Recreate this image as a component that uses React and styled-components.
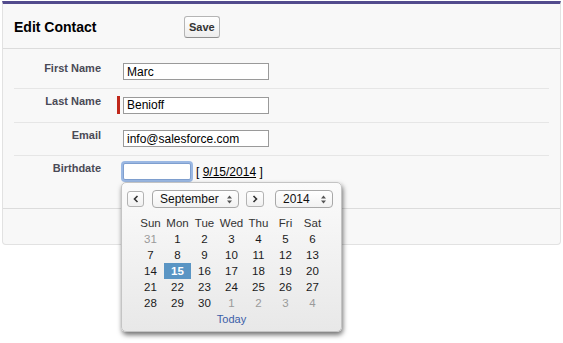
import React from "react";
import styled, { createGlobalStyle } from "styled-components";

const Global = createGlobalStyle`
  html, body { margin: 0; padding: 0; background: #fff; }
  html, body, #root { min-height: 343px; }
  body { font-family: "Liberation Sans", Arial, sans-serif; padding: 1px 3px 0 2px; }
  * { box-sizing: border-box; }
`;

const Panel = styled.div`
  width: 559px;
  border-top: 3px solid #524b8d;
  border-left: 1px solid #e2e2e2;
  border-right: 1px solid #e2e2e2;
  border-bottom: 1px solid #e2e2e2;
  border-radius: 0 0 4px 4px;
  background: #f8f8f8;
`;

const Header = styled.div`
  display: flex;
  align-items: center;
  height: 45px;
  padding: 1px 0 0 11px;
  border-bottom: 1px solid #dcdcdc;
`;

const Title = styled.h2`
  margin: 0;
  width: 170px;
  font-size: 14px;
  font-weight: bold;
  color: #000;
`;

const Button = styled.button`
  height: 22px;
  padding: 0 4px;
  font-family: "Liberation Sans", Arial, sans-serif;
  font-size: 11px;
  font-weight: bold;
  color: #333;
  background: linear-gradient(#ffffff, #ededed);
  border: 1px solid #b5b5b5;
  border-bottom-color: #8f8f8f;
  border-radius: 3px;
`;

const Body = styled.div`
  padding: 7px 11px 20px;
`;

const Row = styled.div`
  display: flex;
  align-items: flex-start;
  padding: 5px 0 8px;
  border-bottom: ${(p) => (p.$last ? "none" : "1px solid #e6e6e6")};
`;

const Label = styled.label`
  width: 87px;
  text-align: right;
  font-size: 11px;
  line-height: 14px;
  font-weight: bold;
  color: #4a4a56;
`;

const Field = styled.div`
  display: flex;
  align-items: center;
  padding: 2px 0 0 22px;
  font-size: 12px;
  color: #000;
`;

const Required = styled.span`
  width: 3px;
  height: 18px;
  margin-left: -6px;
  margin-right: 3px;
  background: #c0281b;
`;

const Input = styled.input`
  width: ${(p) => p.$w || 146}px;
  height: 17px;
  padding: 0 3px;
  font-family: "Liberation Sans", Arial, sans-serif;
  font-size: 12px;
  color: #000;
  background: #fff;
  border: 1px solid ${(p) => (p.$focus ? "#7f9fcf" : "#9a9a9a")};
  box-shadow: ${(p) => (p.$focus ? "0 0 0 2px #9bb8e3" : "none")};
  border-radius: ${(p) => (p.$focus ? "2px" : "0")};
  outline: none;
`;

const DateWrap = styled.div`
  position: relative;
  display: flex;
  align-items: center;
`;

const DateLink = styled.span`
  margin-left: 5px;
  font-size: 12px;
  color: #000;
  a { color: #000; text-decoration: underline; }
`;

const Picker = styled.div`
  position: absolute;
  top: 19px;
  left: -2px;
  width: 221px;
  height: 150px;
  padding: 7px 5px 5px 5px;
  border: 1px solid #c4c4c4;
  border-radius: 5px;
  background: linear-gradient(#fbfbfb, #e8e8e8);
  box-shadow: 1px 3px 5px rgba(0, 0, 0, 0.55);
  z-index: 2;
`;

const Nav = styled.div`
  display: flex;
  align-items: center;
  height: 18px;
`;

const ArrowBtn = styled.span`
  display: flex;
  align-items: center;
  justify-content: center;
  width: ${(p) => p.$w}px;
  height: 16px;
  margin-left: ${(p) => p.$ml || 0}px;
  border: 1px solid #b3b3b3;
  border-radius: 3px;
  background: linear-gradient(#ffffff, #f0f0f0);
`;

const Select = styled.span`
  display: flex;
  align-items: center;
  justify-content: space-between;
  width: ${(p) => p.$w}px;
  height: 18px;
  margin-left: ${(p) => p.$ml}px;
  padding: 0 6px 0 7px;
  font-size: 12px;
  color: #111;
  border: 1px solid #a8a8a8;
  border-radius: 4px;
  background: linear-gradient(#ffffff, #f2f2f2);
`;

const Grid = styled.div`
  display: grid;
  grid-template-columns: repeat(7, 27px);
  grid-auto-rows: 16px;
  justify-content: center;
  margin-top: 7px;
  font-size: 11.5px;
`;

const Cell = styled.span`
  text-align: center;
  line-height: 16px;
  color: ${(p) => (p.$sel ? "#fff" : p.$muted ? "#9a9a9a" : "#1a1a1a")};
  background: ${(p) => (p.$sel ? "#5a95c4" : "transparent")};
  font-weight: ${(p) => (p.$sel ? "bold" : "normal")};
`;

const HeadCell = styled.span`
  text-align: center;
  line-height: 16px;
  color: #333;
`;

const Today = styled.a`
  grid-column: 1 / -1;
  text-align: center;
  line-height: 16px;
  font-size: 11px;
  color: #3b5ea8;
`;

const Footer = styled.div`
  height: 36px;
  border-top: 1px solid #dcdcdc;
`;

const Chevron = ({ dir }) => (
  <svg width="6" height="8" viewBox="0 0 6 8">
    <path
      d={dir === "left" ? "M4.5 1 L1.5 4 L4.5 7" : "M1.5 1 L4.5 4 L1.5 7"}
      fill="none"
      stroke="#333"
      strokeWidth="1.6"
    />
  </svg>
);

const UpDown = () => (
  <svg width="5" height="9" viewBox="0 0 5 9">
    <path d="M2.5 0.5 L5 3.5 H0 Z M2.5 8.5 L5 5.5 H0 Z" fill="#555" />
  </svg>
);

const days = ["Sun", "Mon", "Tue", "Wed", "Thu", "Fri", "Sat"];
const weeks = [
  [31, 1, 2, 3, 4, 5, 6],
  [7, 8, 9, 10, 11, 12, 13],
  [14, 15, 16, 17, 18, 19, 20],
  [21, 22, 23, 24, 25, 26, 27],
  [28, 29, 30, 1, 2, 3, 4],
];

export default function App() {
  return (
    <>
      <Global />
      <Panel>
        <Header>
          <Title>Edit Contact</Title>
          <Button>Save</Button>
        </Header>
        <Body>
          <Row>
            <Label>First Name</Label>
            <Field>
              <Input defaultValue="Marc" />
            </Field>
          </Row>
          <Row>
            <Label>Last Name</Label>
            <Field>
              <Required />
              <Input defaultValue="Benioff" />
            </Field>
          </Row>
          <Row>
            <Label>Email</Label>
            <Field>
              <Input defaultValue="info@salesforce.com" />
            </Field>
          </Row>
          <Row $last>
            <Label>Birthdate</Label>
            <Field>
              <DateWrap>
                <Input $w={68} $focus />
                <DateLink>
                  [ <a>9/15/2014</a> ]
                </DateLink>
                <Picker>
                  <Nav>
                    <ArrowBtn $w={17}>
                      <Chevron dir="left" />
                    </ArrowBtn>
                    <Select $w={87} $ml={8}>
                      September <UpDown />
                    </Select>
                    <ArrowBtn $w={18} $ml={7}>
                      <Chevron dir="right" />
                    </ArrowBtn>
                    <Select $w={58} $ml={11}>
                      2014 <UpDown />
                    </Select>
                  </Nav>
                  <Grid>
                    {days.map((d) => (
                      <HeadCell key={d}>{d}</HeadCell>
                    ))}
                    {weeks.map((w, wi) =>
                      w.map((n, di) => (
                        <Cell
                          key={`${wi}-${di}`}
                          $muted={(wi === 0 && n > 20) || (wi === 4 && n < 10)}
                          $sel={wi === 2 && n === 15}
                        >
                          {n}
                        </Cell>
                      ))
                    )}
                    <Today>Today</Today>
                  </Grid>
                </Picker>
              </DateWrap>
            </Field>
          </Row>
        </Body>
        <Footer />
      </Panel>
    </>
  );
}
